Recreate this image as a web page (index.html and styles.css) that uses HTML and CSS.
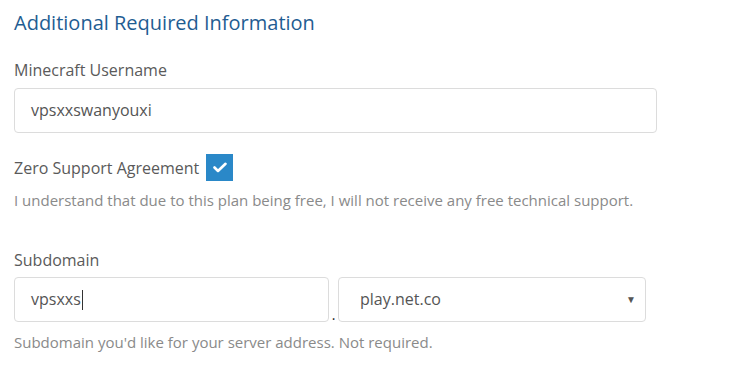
FILE: index.html
```html
<!DOCTYPE html>
<html>
<head>
<meta charset="utf-8">
<link rel="stylesheet" href="styles.css">
</head>
<body>
<div class="form">
  <h3 class="title">Additional Required Information</h3>
  <div class="group">
    <label class="label">Minecraft Username</label>
    <div class="input wide">vpsxxswanyouxi</div>
  </div>
  <div class="group agree">
    <div class="check-row">
      <span class="label inline">Zero Support Agreement</span>
      <span class="checkbox"><svg width="14" height="11" viewBox="0 0 14 11"><path d="M1.5 5.5 L5 9 L12.5 1.8" fill="none" stroke="#fff" stroke-width="2.6" stroke-linecap="round" stroke-linejoin="round"/></svg></span>
    </div>
    <p class="help">I understand that due to this plan being free, I will not receive any free technical support.</p>
  </div>
  <div class="group sub">
    <label class="label">Subdomain</label>
    <div class="sub-row">
      <div class="input half">vpsxxs<span class="caret"></span></div>
      <span class="dot">.</span>
      <div class="input select">play.net.co<span class="arrow">▼</span></div>
    </div>
    <p class="help">Subdomain you'd like for your server address. Not required.</p>
  </div>
</div>
</body>
</html>
```
FILE: styles.css
```css
html, body {
  margin: 0;
  padding: 0;
  background: #fff;
}
body {
  font-family: "Open Sans", "Noto Sans", sans-serif;
  color: #555;
}
.form {
  padding: 12px 0 0 14px;
  width: 642px;
}
.title {
  margin: 0;
  font-size: 20px;
  line-height: 22px;
  font-weight: 400;
  color: #1f5d92;
}
.group {
  margin-top: 25px;
}
.label {
  display: block;
  font-size: 16px;
  line-height: 22px;
  color: #5a5a5a;
}
.input {
  box-sizing: border-box;
  height: 45px;
  border: 1px solid #dcdcdc;
  border-radius: 4px;
  padding-left: 16px;
  font-size: 16px;
  line-height: 43px;
  color: #555;
  display: flex;
  align-items: center;
}
.wide {
  margin-top: 7px;
  width: 643px;
}
.agree {
  margin-top: 21px;
}
.check-row {
  display: flex;
  align-items: center;
  gap: 7px;
}
.checkbox {
  width: 27px;
  height: 27px;
  background: #2a88c8;
  display: flex;
  align-items: center;
  justify-content: center;
}
.help {
  margin: 9px 0 0;
  font-size: 15px;
  line-height: 21px;
  color: #8a8a8a;
}
.sub {
  margin-top: 38px;
}
.sub-row {
  margin-top: 6px;
  display: flex;
  align-items: flex-end;
}
.half {
  width: 315px;
}
.caret {
  display: inline-block;
  width: 1px;
  height: 20px;
  background: #333;
  margin-left: 1px;
}
.dot {
  width: 9px;
  text-align: center;
  font-size: 14px;
  line-height: 14px;
  color: #222;
}
.select {
  width: 308px;
  padding-left: 21px;
  position: relative;
}
.arrow {
  margin-left: auto;
  margin-right: 9px;
  font-size: 10px;
  color: #555;
}
.sub .help {
  margin-top: 10px;
}
```
